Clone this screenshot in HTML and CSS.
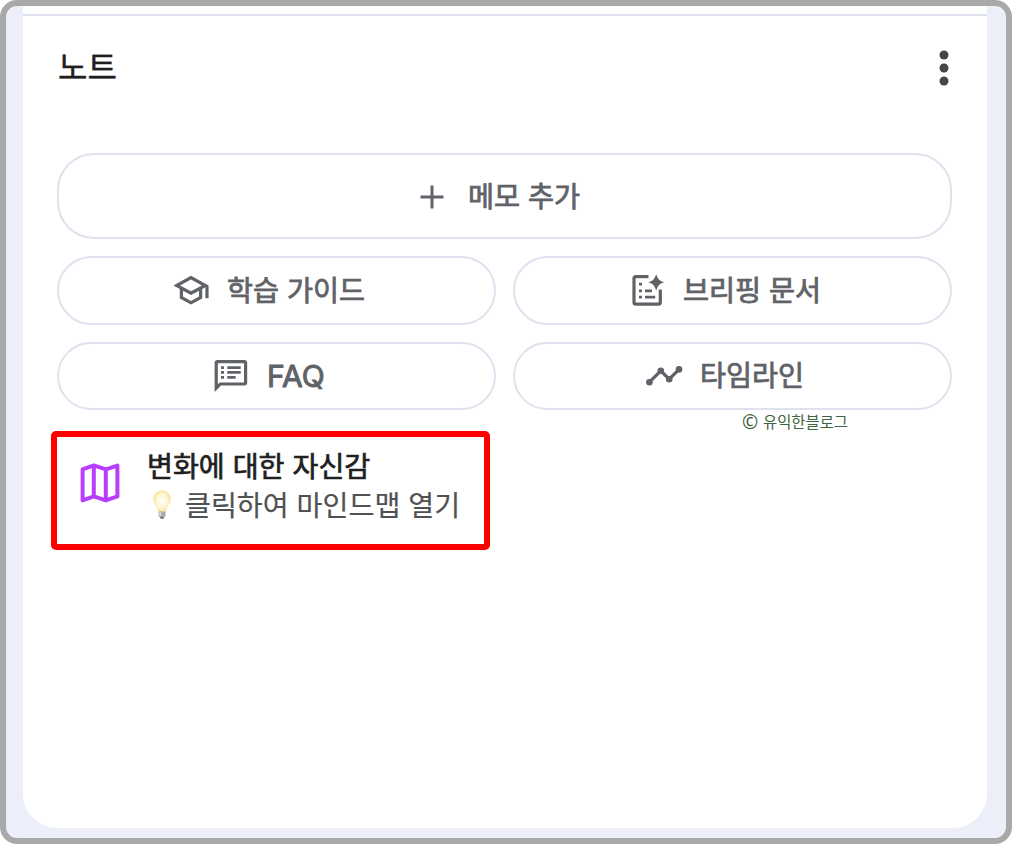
FILE: index.html
```
<!DOCTYPE html>
<html lang="ko">
<head>
    <meta charset="UTF-8">
    <meta name="viewport" content="width=device-width, initial-scale=1.0">
    <title>노트</title>
    <link rel="stylesheet" href="styles.css">
</head>
<body>
    <div class="frame">
        <div class="panel">
            <div class="panel-top"></div>
            <div class="header">
                <h1>노트</h1>
                <svg class="more" viewBox="0 0 10 36">
                    <circle cx="5" cy="5" r="4.5"/>
                    <circle cx="5" cy="18" r="4.5"/>
                    <circle cx="5" cy="31" r="4.5"/>
                </svg>
            </div>

            <div class="actions">
                <button class="btn btn-add">
                    <svg class="icon" viewBox="0 0 40 40"><path d="M18.5 8.500h3v10h10v3h-10v10h-3v-10h-10v-3h10z"/></svg>
                    <span>메모 추가</span>
                </button>
                <button class="btn btn-guide">
                    <svg class="icon" viewBox="-.5 0 25 25"><path d="M12 3 1 9l4 2.180v6L12 21l7-3.820v-6l2-1.090V17h2V9L12 3zm6.820 6L12 12.720 5.180 9 12 5.280 18.820 9zM17 15.990l-5 2.730-5-2.730v-3.720L12 15l5-2.730v3.720z"/></svg>
                    <span>학습 가이드</span>
                </button>
                <button class="btn btn-brief">
                    <svg class="icon" viewBox="0 1 40 40">
                        <path class="line" d="M21.500 6.700H9a2 2 0 0 0-2 2v23.500a2 2 0 0 0 2 2h22.300a2 2 0 0 0 2-2V19.500"/>
                        <path d="M29.200 4.200q1.600 6.500 8 8.100-6.400 1.600-8 8.100-1.600-6.500-8-8.100 6.400-1.600 8-8.100z"/>
                        <path d="M12 12.800h3v2.800h-3zM12 19.400h3v2.800h-3zM12 25.800h3v2.800h-3zM18 19.400h7v2.800h-7zM18 25.800h10.200v2.800H18z"/>
                    </svg>
                    <span>브리핑 문서</span>
                </button>
                <button class="btn btn-faq">
                    <svg class="icon" viewBox="0 0 40 40">
                        <path fill-rule="evenodd" d="M6.500 4h26.700a3 3 0 0 1 3 3v19.600a3 3 0 0 1-3 3H10L3.600 36V7a3 3 0 0 1 2.900-3zM6.800 7.200v21l2-1.800H33V7.200z"/>
                        <path d="M10 10.200h3v2.700h-3zM10 15.100h3v2.700h-3zM10 20h3v2.700h-3zM16.300 10.200h13.400v2.700H16.300zM16.300 15.100h13.400v2.700H16.300zM16.300 20h8.400v2.700h-8.400z"/>
                    </svg>
                    <span>FAQ</span>
                </button>
                <button class="btn btn-timeline">
                    <svg class="icon" viewBox="0 0 40 40">
                        <path class="line" d="M5.400 26.200 16.800 14.800l8.400 8.400 9.800-9.800"/>
                        <circle cx="5.400" cy="26.200" r="3.300"/>
                        <circle cx="16.800" cy="14.800" r="3.300"/>
                        <circle cx="25.200" cy="23.200" r="3.300"/>
                        <circle cx="35" cy="13.400" r="3.300"/>
                    </svg>
                    <span>타임라인</span>
                </button>
            </div>

            <div class="watermark"><span class="copy">©</span> 유익한블로그</div>

            <div class="note">
                <svg class="map" viewBox="0 0 40 40">
                    <path d="M2.600 6.400 13.800 2.400l12 4L37.400 2.600v30.800l-11.600 4-12-4-11.200 4zM13.800 2.400v31M25.800 6.400v31"/>
                </svg>
                <div class="note-text">
                    <div class="note-title">변화에 대한 자신감</div>
                    <div class="note-sub">
                        <svg class="bulb" viewBox="0 0 18 30">
                            <defs>
                                <radialGradient id="glow">
                                    <stop offset="0" stop-color="#fffef5"/>
                                    <stop offset=".6" stop-color="#fff8dc"/>
                                    <stop offset="1" stop-color="#fae39a"/>
                                </radialGradient>
                            </defs>
                            <path fill="url(#glow)" stroke="#f8e4a4" stroke-width=".7" d="M9 .6a8.300 8.300 0 0 1 8.300 8.500c0 4.800-4.500 7.300-4.700 12.300H5.400C5.200 16.400.7 13.900.7 9.100A8.300 8.300 0 0 1 9 .6z"/>
                            <path fill="#aaa9a5" d="M5.500 21.400h7v4.600l-1.500 1.600H7l-1.500-1.600z"/>
                            <path fill="#d8d7d3" d="M6.300 22h2v4h-2z"/>
                            <path fill="#66645f" d="M7 27h4l-.7 1.800H7.700z"/>
                        </svg>
                        <span>클릭하여 마인드맵 열기</span>
                    </div>
                </div>
            </div>
        </div>
    </div>
</body>
</html>
```
FILE: styles.css
```
* {
    box-sizing: border-box;
}

body {
    margin: 0;
    background-color: #fff;
    font-family: 'Noto Sans CJK KR', sans-serif;
}

.frame {
    height: 844px;
    padding: 0 19px 10px 17px;
    border: 6px solid #a9a9a9;
    border-radius: 17px;
    background-color: #eceefa;
}

.panel {
    height: 822px;
    background-color: #fff;
    border-radius: 0 0 34px 34px;
}

.panel-top {
    height: 10px;
    border-bottom: 2px solid #dfe3f0;
}

.header {
    display: flex;
    justify-content: space-between;
    align-items: center;
    height: 104px;
    padding: 0 38px 0 35px;
}

.header h1 {
    margin: 0 0 6px;
    font-size: 32px;
    font-weight: 400;
    line-height: 48px;
    color: #1f1f1f;
    -webkit-text-stroke: 0.4px #1f1f1f;
}

.more {
    width: 10px;
    height: 36px;
    fill: #444746;
}

.actions {
    display: grid;
    grid-template-columns: 439px 439px;
    grid-template-rows: 86px 69px 68px;
    gap: 17px;
    margin: 33px 0 0 34px;
}

.btn {
    display: flex;
    align-items: center;
    padding: 0;
    border: 2px solid #dfe1ee;
    border-radius: 35px;
    background-color: #fff;
    font-family: Inter, 'Noto Sans CJK KR', sans-serif;
    font-size: 28.3px;
    line-height: 42px;
    color: #5f6368;
    -webkit-text-stroke: 0.8px #5f6368;
}

.btn-add {
    grid-column: 1 / 3;
    padding: 1px 0 0 353px;
    border-radius: 37px;
}

.btn-guide {
    padding-left: 112px;
}

.btn-brief {
    padding-left: 112px;
}

.btn-faq {
    padding-left: 152px;
}

.btn-faq span {
    font-size: 30px;
    -webkit-text-stroke: 1px #5f6368;
}

.btn-timeline {
    padding-left: 129px;
}

.icon {
    width: 40px;
    height: 40px;
    margin-right: 16px;
    fill: #5f6368;
}

.icon .line {
    fill: none;
    stroke: #5f6368;
    stroke-width: 3.2;
}

.watermark {
    display: flex;
    align-items: center;
    height: 22px;
    margin-left: 719px;
    font-size: 15.4px;
    line-height: 22px;
    color: #3f6540;
}

.copy {
    width: 17px;
    margin: 2px 4px 0 0;
    font-family: 'Noto Sans', sans-serif;
    font-size: 19.5px;
}

/* 빨간색 강조 상자 */
.note {
    display: flex;
    width: 439px;
    height: 119px;
    margin: -1px 0 0 28px;
    padding: 9px 0 0 23px;
    border: 6px solid #f00;
    border-radius: 5px;
}

.map {
    width: 40px;
    height: 40px;
    margin: 17px 27px 0 0;
    fill: none;
    stroke: #b83dff;
    stroke-width: 4;
    stroke-linejoin: round;
}

.note-title {
    font-size: 28.2px;
    line-height: 38px;
    color: #1f1f1f;
    -webkit-text-stroke: 0.7px #1f1f1f;
}

.note-sub {
    display: flex;
    align-items: center;
    font-size: 28.2px;
    line-height: 39px;
    color: #505152;
    -webkit-text-stroke: 0.2px #505152;
}

.bulb {
    width: 18px;
    height: 30px;
    margin: 3px 14px 0 6px;
}
```
